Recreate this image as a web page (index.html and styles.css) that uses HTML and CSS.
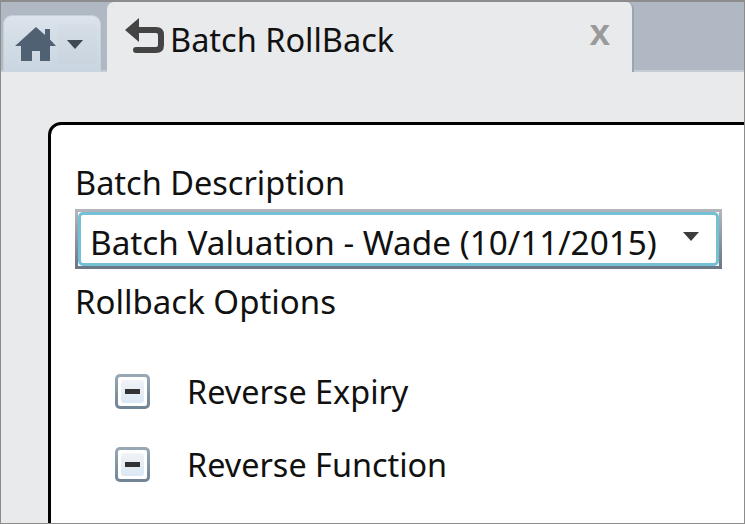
FILE: index.html
```html
<!DOCTYPE html>
<html lang="en">
<head>
<meta charset="utf-8">
<title>Batch RollBack</title>
<link rel="stylesheet" href="styles.css">
</head>
<body>
<div class="window">
  <div class="tabbar">
    <div class="home-tab">
      <svg class="home-icon" width="42" height="36" viewBox="0 0 42 36"><path fill="#4f6172" d="M21 1 L30 9 V3 H35 V13.500 L41 20 H35 V35 H25 V25 H17 V35 H6 V20 H0 Z"/></svg>
      <div class="caret-box">
        <svg class="caret" width="18" height="11" viewBox="0 0 20 12"><path fill="#3f4a55" d="M1 1 H19 L10 11 Z"/></svg>
      </div>
    </div>
    <div class="active-tab">
      <svg class="back-icon" width="42" height="38" viewBox="0 0 42 38"><path fill="none" stroke="#444" stroke-width="6" stroke-linecap="round" stroke-linejoin="round" d="M11 13 H32 Q37 13 37 18 V28 Q37 33 32 33 H12"/><path fill="#444" d="M1 13 L15 1 V25 Z"/></svg>
      <span class="tab-title">Batch RollBack</span>
      <span class="close">x</span>
    </div>
  </div>
  <main class="content">
    <section class="card">
      <div class="label">Batch Description</div>
      <div class="select">
        <span class="select-value">Batch Valuation - Wade (10/11/2015)</span>
        <svg class="select-caret" width="16" height="10" viewBox="0 0 18 11"><path fill="#3c3c3c" d="M0 0 H18 L9 10 Z"/></svg>
      </div>
      <div class="label options-label">Rollback Options</div>
      <div class="option"><span class="check"><span class="dash"></span></span><span>Reverse Expiry</span></div>
      <div class="option"><span class="check"><span class="dash"></span></span><span>Reverse Function</span></div>
    </section>
  </main>
</div>
</body>
</html>
```
FILE: styles.css
```css
* { box-sizing: border-box; }
html, body { margin: 0; height: 100%; overflow: hidden; }
body { font-family: "Noto Sans", "Open Sans", sans-serif; color: #111; }
.window {
  width: 745px; height: 524px;
  border: 1px solid #8c8c8c; border-top-width: 2px;
  background: #e9eaeb;
  display: flex; flex-direction: column; overflow: hidden;
}
.tabbar {
  height: 70px; flex: none;
  background: #b0b8c3;
  border-bottom: 2px solid #c4ccd4;
  display: flex; align-items: flex-end;
  padding-left: 2px; gap: 6px;
}
.home-tab {
  width: 98px; height: 57px; margin-bottom: -2px;
  background: linear-gradient(#dbe3eb, #c9d5e0);
  border: 1px solid #c5d0da; border-bottom: none;
  border-radius: 9px 9px 0 0;
  display: flex; align-items: flex-start;
  padding: 10px 0 0 12px;
}
.home-icon { flex: none; margin-left: -1px; }
.caret-box {
  flex: none; width: 40px; height: 40px; margin-top: -2px;
  background: linear-gradient(90deg, rgba(120,130,140,.03) 67%, rgba(120,130,140,.2) 67%, rgba(120,130,140,.2) 68%, rgba(120,130,140,.03) 68%);
  border-radius: 4px;
  display: flex; align-items: center; padding-left: 9px;
}
.caret { flex: none; }
.active-tab {
  width: 527px; height: 70px; margin-bottom: -2px;
  background: #e9eaeb;
  border-radius: 7px 7px 0 0;
  border-right: 2px solid #9ba6b2;
  display: flex; align-items: flex-start;
  padding: 15px 0 0 17px;
  position: relative;
}
.back-icon { flex: none; }
.tab-title { font-size: 32.5px; line-height: 44px; margin-left: 4px; margin-top: 1px; }
.close {
  position: absolute; right: 22px; top: 9px;
  font-family: "Liberation Sans", sans-serif;
  font-size: 37px; line-height: 44px; font-weight: 700; color: #9a9a9a;
}
.content { flex: 1; padding: 50px 0 0 47px; min-height: 0; }
.card {
  height: 420px; width: 720px;
  background: #fff;
  border: 3px solid #000; border-radius: 13px 0 0 0;
  padding: 36px 0 0 24px;
}
.label { font-size: 32.5px; line-height: 44px; }
.select {
  width: 647px; height: 60px; margin-top: 4px;
  border: 3px solid;
  border-image: linear-gradient(#b2b6bc, #6b7884) 1;
  background: #fff;
  position: relative;
  display: flex; align-items: center;
  padding: 5px 0 0 12px;
}
.select::before {
  content: ""; position: absolute; inset: 0;
  border: 3px solid #74c1d6; border-radius: 5px;
}
.select-value { font-size: 33.3px; line-height: 44px; white-space: nowrap; }
.select-caret { position: absolute; right: 20px; top: 20px; }
.options-label { margin-top: 11px; margin-bottom: 45px; font-size: 33px; }
.option { display: flex; align-items: center; height: 44px; margin-bottom: 29px; font-size: 32.4px; padding-left: 40px; gap: 37px; }
.check {
  width: 35px; height: 35px; flex: none;
  border: 3px solid transparent; border-radius: 5px;
  background: linear-gradient(#fff, #fff) padding-box, linear-gradient(#9aa9b6, #6f8394) border-box;
  padding: 3px;
  display: block;
}
.dash {
  display: flex; align-items: center; justify-content: center;
  width: 100%; height: 100%;
  background: linear-gradient(#f1f3f6, #dbe8f4);
  border-radius: 3px;
}
.dash::before { content: ""; width: 15px; height: 5px; background: #333; }
```
